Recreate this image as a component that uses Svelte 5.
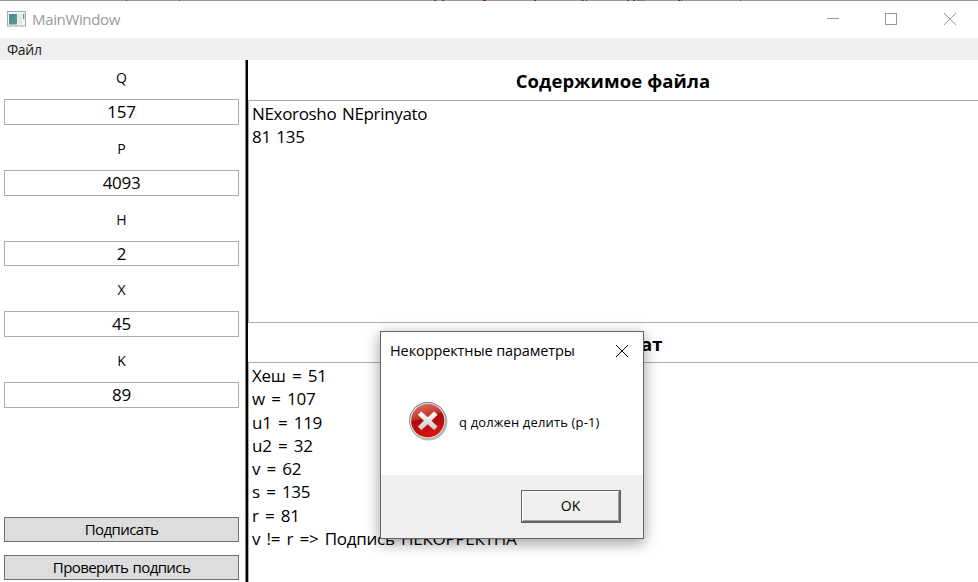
<script>
  const params = [
    { name: 'Q', value: '157' },
    { name: 'P', value: '4093' },
    { name: 'H', value: '2' },
    { name: 'X', value: '45' },
    { name: 'K', value: '89' },
  ];
  const content = ['NExorosho NEprinyato', '81 135'];
  const result = ['Хеш = 51', 'w = 107', 'u1 = 119', 'u2 = 32', 'v = 62', 's = 135', 'r = 81', 'v != r => Подпись НЕКОРРЕКТНА'];
</script>

<div class="window">
  <svg class="edge" width="978" height="1" viewBox="0 0 978 1" shape-rendering="crispEdges">
    <rect width="978" height="1" fill="#999" />
    <path d="M126 .5h1M179 .5h1M434 .5h2M442 .5h2M534 .5h2M586 .5h1M678 .5h2M681 .5h1M740 .5h1" stroke="#444" />
    <path d="M627 .5h2M633 .5h2" stroke="#444" />
    <path d="M637 .5h8" stroke="#777" />
    <path d="M483 .5h3" stroke="#802020" />
    <path d="M581 .5h3" stroke="#6b6415" />
  </svg>
  <header class="titlebar">
    <svg class="appicon" width="19" height="16" viewBox="0 0 19 16">
      <rect x="0.5" y="0.5" width="18" height="14.5" fill="#f3f4f5" stroke="#a3a9ae" />
      <rect x="2" y="3" width="8" height="10.5" fill="#4f9a8c" />
      <path d="M2 3h8L2 12z" fill="#4a83a4" opacity=".6" />
      <rect x="11" y="3" width="4" height="10.5" fill="#e4e8ea" />
      <rect x="16" y="3" width="1.3" height="5" fill="#5aa189" />
    </svg>
    <span class="title">MainWindow</span>
    <svg class="controls" width="134" height="14" viewBox="0 0 134 14" fill="none" stroke="#999">
      <path d="M1 6.5h12" />
      <rect x="59.5" y="1.5" width="11" height="11" />
      <path d="M118 1l12 12M130 1l-12 12" />
    </svg>
  </header>
  <nav class="menu"><span>Файл</span></nav>
  <main>
    <aside>
      <div class="params">
        {#each params as p}
          <div class="param">
            <div class="label">{p.name}</div>
            <div class="field"><span>{p.value}</span></div>
          </div>
        {/each}
      </div>
      <div class="actions">
        <button class="sign">Подписать</button>
        <button class="verify">Проверить подпись</button>
      </div>
    </aside>
    <section class="output">
      <h2>Содержимое файла</h2>
      <div class="box first">
        {#each content as line}<div>{line}</div>{/each}
      </div>
      <h2>Результат</h2>
      <div class="box second">
        {#each result as line}<div>{line}</div>{/each}
      </div>
    </section>
  </main>

  <div class="dialog">
    <div class="dhead">
      <span class="dtitle">Некорректные параметры</span>
      <svg width="14" height="14" viewBox="0 0 14 14" stroke="#000" stroke-width="1"><path d="M1 1l12 12M13 1L1 13" /></svg>
    </div>
    <div class="dbody">
      <svg width="40" height="40" viewBox="0 0 40 40">
        <defs>
          <linearGradient id="red" x1="0" y1="0" x2="0.3" y2="1">
            <stop offset="0" stop-color="#e27a72" />
            <stop offset=".45" stop-color="#c8342f" />
            <stop offset=".52" stop-color="#a80a0a" />
            <stop offset="1" stop-color="#dc1010" />
          </linearGradient>
          <linearGradient id="rim" x1="0" y1="0" x2="0" y2="1">
            <stop offset="0" stop-color="#777" />
            <stop offset="1" stop-color="#aaa" />
          </linearGradient>
          <linearGradient id="cross" x1="0" y1="0" x2="0" y2="1">
            <stop offset="0" stop-color="#fff" />
            <stop offset="1" stop-color="#cbcbcb" />
          </linearGradient>
        </defs>
        <circle cx="20.6" cy="20.8" r="18.8" fill="#000" opacity=".25" />
        <circle cx="19.7" cy="19.7" r="18.7" fill="url(#rim)" />
        <circle cx="19.7" cy="19.7" r="17.8" fill="#dedcdc" />
        <circle cx="19.7" cy="19.7" r="16.6" fill="url(#red)" />
        <path d="M13.3 10.2l6.4 5.8 6.4-5.8 3.6 3.6-6 5.9 6 5.9-3.6 3.6-6.4-5.8-6.4 5.8-3.6-3.6 6-5.9-6-5.9z" fill="url(#cross)" stroke="#8d1512" stroke-opacity=".35" stroke-width=".8" stroke-linejoin="round" />
      </svg>
      <span class="msg">q должен делить (p-1)</span>
    </div>
    <div class="dfoot"><button class="ok"><span>OK</span></button></div>
  </div>
</div>

<style>
  :global(body) { margin: 0; overflow: hidden; }
  .window {
    position: relative; width: 978px; height: 582px; overflow: hidden; box-sizing: border-box;
    display: flex; flex-direction: column; background: #fff; color: #000;
    font-family: 'Open Sans', 'Noto Sans', sans-serif;
  }
  .edge { display: block; flex: none; }
  .titlebar { height: 37px; flex: none; display: flex; align-items: flex-start; padding: 10px 18px 0 7px; box-sizing: border-box; }
  .title { margin: -2px 0 0 6px; font-size: 15px; line-height: 20px; color: #999; letter-spacing: -0.35px; flex: 1; }
  .controls { margin-top: 1px; }
  .menu { height: 22px; flex: none; background: #efefef; padding-left: 7px; font-size: 14px; line-height: 23px; letter-spacing: -0.3px; color: #1a1a1a; }
  main { flex: 1; min-height: 0; display: flex; }
  aside { width: 245px; flex: none; box-sizing: border-box; padding: 0 6px 2px 4px; display: flex; flex-direction: column; justify-content: space-between; }
  .param { height: 71px; box-sizing: border-box; }
  .param:nth-child(3) .field { height: 25px; line-height: 23px; }
  .param:nth-child(3) { height: 70px; }
  .label { height: 39px; line-height: 35px; text-align: center; font-size: 14px; }
  .field { height: 26px; box-sizing: border-box; border: 1px solid #abadb3; text-align: center; font-size: 17px; line-height: 24px; letter-spacing: -0.3px; }
  .actions { display: flex; flex-direction: column; gap: 13px; }
  button { font-family: inherit; color: #000; padding: 0; border-radius: 0; }
  .actions button { height: 25px; border: 1px solid #707070; background: #ddd; font-size: 15px; line-height: 23px; letter-spacing: -0.6px; word-spacing: 1px; }
  .output { flex: 1; min-width: 0; display: flex; flex-direction: column; border-left: 2px solid #000; box-shadow: -1px 0 #808080; margin-left: 1px; }
  h2 { margin: 0; height: 40px; line-height: 42px; flex: none; font-size: 18.5px; font-weight: 700; text-align: center; letter-spacing: 0.1px; }
  .box { box-sizing: border-box; border: 1px solid #abadb3; border-right: 0; padding: 1px 3px; font-size: 17px; line-height: 23.27px; letter-spacing: -0.33px; word-spacing: 1.5px; white-space: pre; }
  .first { height: 223px; flex: none; }
  .second { flex: 1; border-bottom: 0; margin-top: -1px; letter-spacing: -0.28px; word-spacing: 2.2px; }
  .dialog {
    position: absolute; left: 380px; top: 331px; width: 264px; height: 208px; box-sizing: border-box;
    border: 1px solid #666; background: #fff; box-shadow: 0 4px 14px rgba(0,0,0,.4); display: flex; flex-direction: column;
  }
  .dhead { height: 38px; flex: none; display: flex; align-items: center; justify-content: space-between; padding: 0 14px 0 9px; }
  .dhead svg { margin-top: -1px; }
  .dtitle { font-size: 14.5px; letter-spacing: -0.1px; padding-bottom: 2px; }
  .dbody { flex: 1; display: flex; align-items: center; padding: 0 0 4px 27px; }
  .msg { margin-left: 11px; font-size: 13px; letter-spacing: 0.15px; padding-top: 3px; }
  .dfoot { height: 63px; flex: none; background: #efefef; display: flex; justify-content: flex-end; padding: 15px 22px 0 0; box-sizing: border-box; }
  .ok { width: 100px; height: 33px; background: #efefef; border: 1px solid #666; border-right-width: 2px; border-bottom-width: 2px; box-shadow: inset 1px 1px #fff, inset -1px -1px #a0a0a0; font-size: 14px; padding-bottom: 2px; }
</style>
